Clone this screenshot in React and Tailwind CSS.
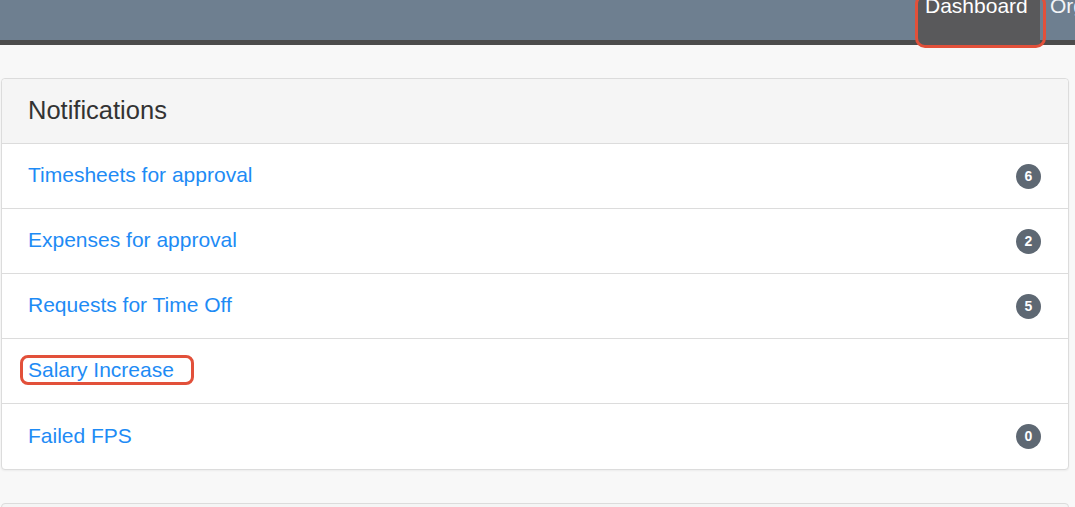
const rows = [
  { label: "Timesheets for approval", count: 6 },
  { label: "Expenses for approval", count: 2 },
  { label: "Requests for Time Off", count: 5 },
  { label: "Salary Increase", count: null, marked: true },
  { label: "Failed FPS", count: 0 },
];

export default function App() {
  return (
    <div className="w-[1075px] h-[507px] overflow-hidden bg-[#f8f8f8] font-['Liberation_Sans',Arial,sans-serif]">
      {/* top bar */}
      <nav className="relative h-[45px] bg-[#6e7f90] shadow-[inset_0_-5px_0_#4c4c4c] flex justify-end overflow-visible">
        <div className="relative w-[123px] bg-[#59595b] pl-[8px]">
          <span className="block -mt-[6px] text-[21px] leading-[24px] text-white">Dashboard</span>
          <span className="absolute -left-[2px] -top-[6px] w-[131px] h-[54px] border-[3px] border-[#e2503a] rounded-[10px]" />
        </div>
        <div className="w-[35px] pl-[10px] overflow-hidden whitespace-nowrap">
          <span className="block -mt-[6px] text-[21px] leading-[24px] text-[#f2f4f7]">Org</span>
        </div>
      </nav>

      <main className="pt-[33px] pl-[1px] pr-[6px]">
        <section className="bg-white border border-[#dcdcdc] rounded-[4px] shadow-[0_1px_2px_rgba(0,0,0,0.05)]">
          <header className="h-[65px] bg-[#f5f5f5] border-b border-[#dcdcdc] rounded-t-[4px] flex items-center px-[26px]">
            <h2 className="text-[25.5px] leading-[30px] -mt-[2px] text-[#333]">Notifications</h2>
          </header>
          {rows.map((r, i) => (
            <div
              key={r.label}
              className={`h-[65px] flex items-center justify-between pl-[26px] pr-[27px] ${i < rows.length - 1 ? "border-b border-[#dcdcdc]" : ""}`}
            >
              <span className="relative text-[21px] leading-[24px] -mt-[2px] text-[#1e8bf5]">
                {r.label}
                {r.marked && (
                  <span className="absolute -left-[8px] -right-[20px] -top-[3px] -bottom-[3px] border-[3px] border-[#e2503a] rounded-[8px]" />
                )}
              </span>
              {r.count !== null && (
                <span className="w-[25px] h-[25px] rounded-full bg-[#5e6873] text-white text-[14px] font-bold flex items-center justify-center">
                  {r.count}
                </span>
              )}
            </div>
          ))}
        </section>

        <section className="mt-[33px] h-[60px] bg-[#f5f5f5] border border-[#dcdcdc] rounded-[4px]" />
      </main>
    </div>
  );
}
